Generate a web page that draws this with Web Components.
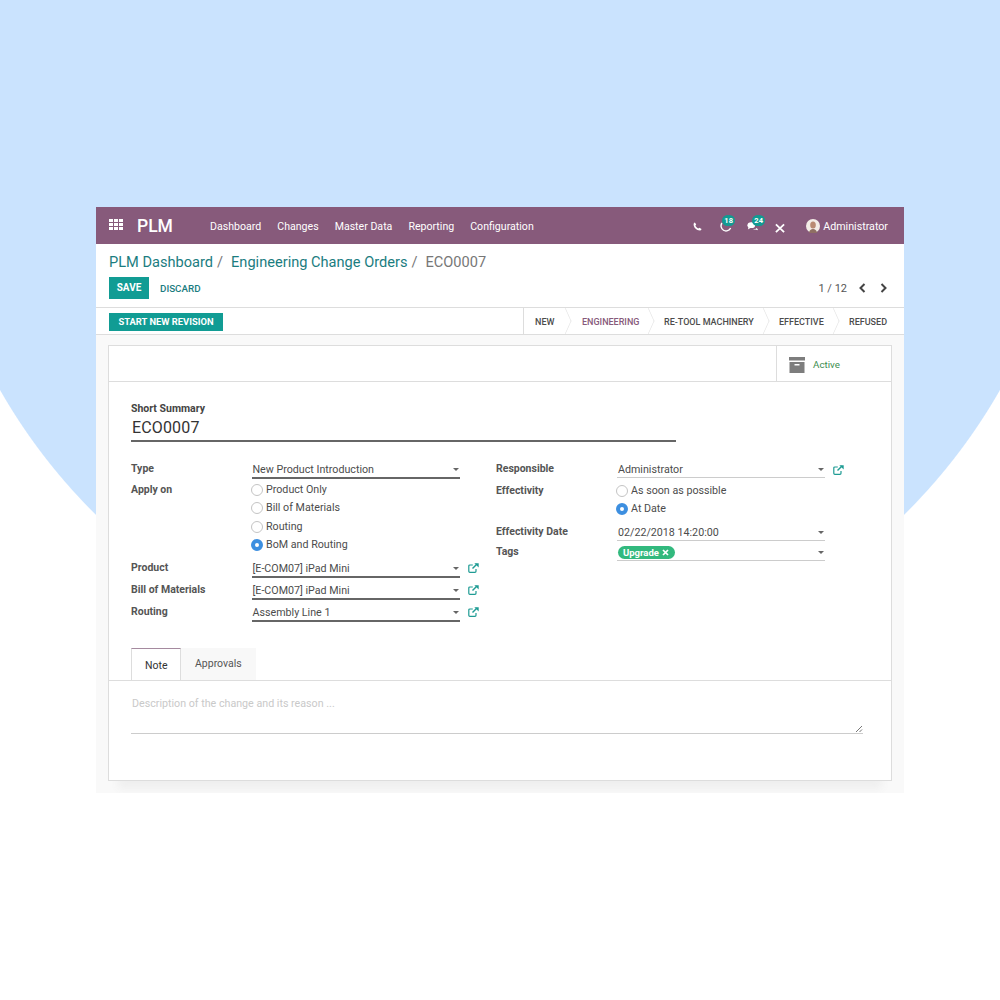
<!DOCTYPE html>
<html>
<head>
<meta charset="utf-8">
<title>PLM</title>
<style>
    html, body { margin: 0; }
    /* big circle behind the window */
    body { font-family: Roboto, "Liberation Sans", sans-serif; font-size: 11px; color: #4c4c4c; height: 1000px; overflow: hidden; background: radial-gradient(circle at 500px 105px, #cae3fe 575px, #fff 576px); }
</style>
</head>
<body>
<plm-app>
    <plm-navbar></plm-navbar>
    <plm-control-panel></plm-control-panel>
    <plm-statusbar></plm-statusbar>
    <plm-sheet></plm-sheet>
</plm-app>

<script>
const EXT_ICON = `<svg width="11" height="10" viewBox="0 0 11 10" fill="none" stroke="#1f9c94" stroke-width="1.2"><path d="M8 6v2.300a1 1 0 0 1-1 1H1.800a1 1 0 0 1-1-1V3a1 1 0 0 1 1-1h3"/><path d="M4.500 5.600 9 1.100" stroke-width="1.400"/><path d="M6.300.2h4.400v4.400z" fill="#1f9c94" stroke="none"/></svg>`;

class PlmApp extends HTMLElement {
    constructor() {
        super();
        this.attachShadow({ mode: "open" }).innerHTML = `
            <style>
                :host { display: block; width: 808px; height: 586px; margin: 207px 0 0 96px; background: #f9f9f9; overflow: hidden; }
            </style>
            <slot></slot>
        `;
    }
}

class PlmNavbar extends HTMLElement {
    constructor() {
        super();
        this.attachShadow({ mode: "open" }).innerHTML = `
            <style>
                :host { display: flex; align-items: center; height: 37px; background: #875a7b; color: #fff; font-size: 10.600px; padding: 1px 16px 0 13px; box-sizing: border-box; }
                .grid { width: 14px; height: 11px; margin: -4px 14px 0 0; display: block; }
                .brand { font-size: 17.500px; font-weight: 500; width: 73px; margin-top: -1px; }
                .menu { display: flex; gap: 16px; flex: 1; }
                .tray { display: flex; align-items: center; }
                .badged { position: relative; display: flex; }
                .badge { position: absolute; top: -5px; min-width: 13px; height: 11px; border-radius: 6px; background: #129a92; font-size: 7.500px; font-weight: 700; line-height: 11px; text-align: center; }
                .user { display: flex; align-items: center; gap: 3px; margin-left: 21px; }
                .user span { font-size: 10.700px; }
                .avatar { width: 14px; height: 14px; display: block; }
            </style>
            <svg class="grid" viewBox="0 0 14 11" fill="#fff">
                <rect x="0" y="0" width="4" height="3"/><rect x="5" y="0" width="4" height="3"/><rect x="10" y="0" width="4" height="3"/>
                <rect x="0" y="4" width="4" height="3"/><rect x="5" y="4" width="4" height="3"/><rect x="10" y="4" width="4" height="3"/>
                <rect x="0" y="8" width="4" height="3"/><rect x="5" y="8" width="4" height="3"/><rect x="10" y="8" width="4" height="3"/>
            </svg>
            <span class="brand">PLM</span>
            <div class="menu">
                <span>Dashboard</span><span>Changes</span><span>Master Data</span><span>Reporting</span><span>Configuration</span>
            </div>
            <div class="tray">
                <svg width="9" height="9" viewBox="0 0 9 9" fill="#fff" style="margin-right:18px"><path d="M1.900.4 3.200 2.600 2.400 3.500c.5 1.300 1.600 2.400 3 3l.9-.8 2.300 1.200c-.2.8-.9 1.500-1.800 1.500C3.400 8.400.6 5.500.6 2.200.6 1.300 1.100.7 1.900.4z"/></svg>
                <span class="badged" style="margin-right:15px">
                    <svg width="12" height="12" viewBox="0 0 12 12" fill="none" stroke="#fff" stroke-width="1.400"><path d="M2 3a5 5 0 1 0 8.600 5"/></svg>
                    <span class="badge" style="left:2px">18</span>
                </span>
                <span class="badged" style="margin-right:16px">
                    <svg width="12" height="12" viewBox="0 0 14 12" fill="#fff"><ellipse cx="5" cy="5" rx="4.500" ry="3.400"/><path d="M2 7 1 10l3.500-2z"/><path d="M7 9.600c2 0 3.500-.3 4.500-1.300l1.500 2.700-3.500-1c-1 .2-2 .1-2.500-.4z"/></svg>
                    <span class="badge" style="left:5px">24</span>
                </span>
                <svg width="10" height="10" viewBox="0 0 11 11" stroke="#fff" stroke-width="2" fill="none" style="margin-top:3px"><path d="M1 1.500 10 10M10 1.500 1 10"/></svg>
                <span class="user">
                    <svg class="avatar" viewBox="0 0 14 14"><circle cx="7" cy="7" r="7" fill="#f3ece6"/><ellipse cx="7" cy="6" rx="2.800" ry="3.600" fill="#b98a72"/><path d="M3 14c.4-3 2-4 4-4s3.600 1 4 4z" fill="#8f6f63"/></svg>
                    <span>Administrator</span>
                </span>
            </div>
        `;
    }
}

class PlmControlPanel extends HTMLElement {
    constructor() {
        super();
        this.attachShadow({ mode: "open" }).innerHTML = `
            <style>
                :host { display: block; height: 63px; background: #fff; padding: 0 13px; box-sizing: border-box; }
                .crumbs { display: flex; padding-top: 8px; height: 25px; font-size: 14.600px; line-height: 20px; color: #777; }
                .crumbs a { color: #1b7d7f; }
                .crumbs i { font-style: normal; color: #777; margin: 0 8px 0 4px; }
                .row { display: flex; align-items: center; justify-content: space-between; }
                .btns { display: flex; align-items: center; }
                .save { width: 40px; height: 22px; line-height: 22px; text-align: center; background: #119c94; color: #fff; font-size: 10px; font-weight: 700; }
                .discard { margin-left: 11px; color: #1b7d7f; font-size: 9.800px; font-weight: 500; }
                .pager { display: flex; align-items: center; font-size: 11px; color: #555; margin-right: 3px; }
                .pager svg { display: block; margin-left: 12px; }
                .pager svg.first { margin-left: 11px; }
            </style>
            <div class="crumbs"><a>PLM Dashboard</a><i>/</i><a>Engineering Change Orders</a><i>/</i><span>ECO0007</span></div>
            <div class="row">
                <div class="btns"><span class="save">SAVE</span><span class="discard">DISCARD</span></div>
                <div class="pager">
                    <span>1 / 12</span>
                    <svg class="first" width="9" height="10" viewBox="0 0 9 10" fill="none" stroke="#444" stroke-width="2"><path d="M6.500 1 2.500 5l4 4"/></svg>
                    <svg width="9" height="10" viewBox="0 0 9 10" fill="none" stroke="#444" stroke-width="2"><path d="M2.500 1l4 4-4 4"/></svg>
                </div>
            </div>
        `;
    }
}

class PlmStatusbar extends HTMLElement {
    constructor() {
        super();
        this.attachShadow({ mode: "open" }).innerHTML = `
            <style>
                :host { display: flex; align-items: center; justify-content: space-between; height: 28px; box-sizing: border-box; background: #fff; border-top: 1px solid #ddd; border-bottom: 1px solid #ddd; padding-left: 13px; }
                .action { height: 18px; line-height: 18px; width: 114px; margin-top: 1px; text-align: center; background: #119c94; color: #fff; font-size: 9.400px; font-weight: 700; }
                .steps { display: flex; height: 100%; border-left: 1px solid #ddd; font-size: 9px; font-weight: 500; color: #4c4c4c; overflow: hidden; }
                .step { display: flex; align-items: center; height: 100%; padding-top: 1px; position: relative; box-sizing: border-box; }
                .step + .step::before { content: ""; position: absolute; left: -10px; top: 3px; width: 19px; height: 19px; border-top: 1px solid #e2e2e2; border-right: 1px solid #e2e2e2; transform: scaleX(.45) rotate(45deg); }
                .on { color: #875a7b; }
            </style>
            <span class="action">START NEW REVISION</span>
            <div class="steps">
                <span class="step" style="width:41px;padding-left:11px">NEW</span>
                <span class="step on" style="width:83px;padding-left:17px">ENGINEERING</span>
                <span class="step" style="width:115px;padding-left:16px">RE-TOOL MACHINERY</span>
                <span class="step" style="width:70px;padding-left:16px">EFFECTIVE</span>
                <span class="step" style="width:71px;padding-left:16px">REFUSED</span>
            </div>
        `;
    }
}

class PlmField extends HTMLElement {
    constructor() {
        super();
        this.attachShadow({ mode: "open" }).innerHTML = `
            <style>
                :host { display: grid; grid-template-columns: 121px 208px 19px; align-items: start; height: 22px; }
                .label { font-weight: 700; font-size: 10.500px; color: #555; line-height: 14px; }
                :host([options]) .label { padding-top: 2px; }
                .value { font-size: 10.700px; line-height: 14px; }
                .select { position: relative; height: 16.500px; padding: .5px 0 0 .5px; box-sizing: border-box; border-bottom: 2px solid #666; }
                :host([light]) .select { height: 16px; border-bottom: 1px solid #ccc; padding-top: 1px; padding-left: 1px; }
                .caret { position: absolute; right: 1px; top: 6px; border: 3px solid transparent; border-top: 3px solid #666; border-bottom: 0; }
                .link { display: none; padding: 2px 0 0 8px; }
                :host([light]) .link { padding-top: 2.500px; }
                :host([external]) .link { display: block; }
            </style>
            <div class="label"></div>
            <div class="value"></div>
            <div class="link">${EXT_ICON}</div>
        `;
    }
    connectedCallback() {
        const root = this.shadowRoot;
        root.querySelector(".label").textContent = this.getAttribute("label");
        const box = root.querySelector(".value");
        if (this.hasAttribute("options")) {
            box.innerHTML = `<slot></slot>`;
        } else {
            box.innerHTML = `<div class="select"><slot></slot><span class="caret"></span></div>`;
        }
    }
}

class PlmRadio extends HTMLElement {
    constructor() {
        super();
        this.attachShadow({ mode: "open" }).innerHTML = `
            <style>
                :host { display: flex; align-items: center; gap: 3px; height: 18.500px; font-size: 10.700px; }
                .dot { width: 12px; height: 12px; margin-left: -1px; box-sizing: border-box; border: 1px solid #c4c4c4; border-radius: 50%; background: #fff; }
                :host([checked]) .dot { background: #fff; border: 4px solid #3d8fe0; }
            </style>
            <span class="dot"></span><slot></slot>
        `;
    }
}

class PlmTag extends HTMLElement {
    constructor() {
        super();
        this.attachShadow({ mode: "open" }).innerHTML = `
            <style>
                :host { display: inline-flex; align-items: center; gap: 3px; height: 13px; padding: 0 6px 0 5px; border-radius: 7px; background: #32b97e; color: #fff; font-size: 9.500px; line-height: 13px; font-weight: 700; vertical-align: top; }
                svg { display: block; }
            </style>
            <slot></slot>
            <svg width="7" height="7" viewBox="0 0 7 7" stroke="#fff" stroke-width="1.700" fill="none"><path d="M1 1l5 5M6 1 1 6"/></svg>
        `;
    }
}

class PlmSheet extends HTMLElement {
    constructor() {
        super();
        this.attachShadow({ mode: "open" }).innerHTML = `
            <style>
                :host { display: block; width: 784px; height: 436px; box-sizing: border-box; margin: 10px 0 0 12px; background: #fff; border: 1px solid #ddd; box-shadow: 0 18px 8px -10px #efefef; }
                .buttons { display: flex; justify-content: flex-end; height: 36px; box-sizing: border-box; border-bottom: 1px solid #ddd; }
                .active { display: flex; align-items: center; width: 115px; box-sizing: border-box; border-left: 1px solid #ddd; padding: 2px 0 0 12px; gap: 8px; color: #3c8d4f; font-size: 9.800px; }
                .body { padding: 20px 22px 0; }
                .small { font-size: 10.500px; font-weight: 700; color: #444; line-height: 13px; }
                .title { width: 544px; height: 22px; margin-top: 2px; padding: 1px 0 0 1px; box-sizing: content-box; font-size: 16px; line-height: 20px; color: #333; letter-spacing: .15px; border-bottom: 2px solid #666; }
                .cols { display: flex; gap: 17px; margin-top: 20px; height: 186px; }
                .tabs { display: flex; padding-left: 22px; height: 32px; border-bottom: 1px solid #ddd; }
                .tab { box-sizing: border-box; height: 32px; line-height: 32px; padding: 0 14px; font-size: 10.500px; color: #555; background: #f8f8f8; }
                .tab.on { width: 50px; padding: 0 13px; line-height: 33px; background: #fff; color: #333; border: 1px solid #ddd; border-bottom: 0; border-top-color: #a58a9f; }
                .note { position: relative; margin: 0 28px 0 22px; height: 53px; border-bottom: 1px solid #ccc; box-sizing: border-box; padding: 16px 1px 0; font-size: 10.700px; color: #c9c9c9; }
                .grip { position: absolute; right: 0; bottom: 0; }
            </style>
            <div class="buttons">
                <div class="active">
                    <svg width="16" height="16" viewBox="0 0 16 16" fill="#7d7d7d"><rect x="0" y="0" width="16" height="3.500"/><path d="M.5 5h15v11H.5zM5.500 7v1.500h5V7z" fill-rule="evenodd"/></svg>
                    <span>Active</span>
                </div>
            </div>
            <div class="body">
                <div class="small">Short Summary</div>
                <div class="title">ECO0007</div>
                <div class="cols">
                    <div>
                        <plm-field label="Type" style="height:18.500px">New Product Introduction</plm-field>
                        <plm-field label="Apply on" options style="height:80.500px">
                            <plm-radio>Product Only</plm-radio>
                            <plm-radio>Bill of Materials</plm-radio>
                            <plm-radio>Routing</plm-radio>
                            <plm-radio checked>BoM and Routing</plm-radio>
                        </plm-field>
                        <plm-field label="Product" external>[E-COM07] iPad Mini</plm-field>
                        <plm-field label="Bill of Materials" external>[E-COM07] iPad Mini</plm-field>
                        <plm-field label="Routing" external>Assembly Line 1</plm-field>
                    </div>
                    <div>
                        <plm-field label="Responsible" external light style="height:19.500px">Administrator</plm-field>
                        <plm-field label="Effectivity" options style="height:43px">
                            <plm-radio>As soon as possible</plm-radio>
                            <plm-radio checked>At Date</plm-radio>
                        </plm-field>
                        <plm-field label="Effectivity Date" light style="height:20.500px">02/22/2018 14:20:00</plm-field>
                        <plm-field label="Tags" light><plm-tag>Upgrade</plm-tag></plm-field>
                    </div>
                </div>
            </div>
            <div class="tabs">
                <span class="tab on">Note</span>
                <span class="tab">Approvals</span>
            </div>
            <div class="note">
                Description of the change and its reason ...
                <svg class="grip" width="8" height="8" viewBox="0 0 8 8" stroke="#777" fill="none"><path d="M1 7 7 1M4.500 7 7 4.500"/></svg>
            </div>
        `;
    }
}

customElements.define("plm-app", PlmApp);
customElements.define("plm-navbar", PlmNavbar);
customElements.define("plm-control-panel", PlmControlPanel);
customElements.define("plm-statusbar", PlmStatusbar);
customElements.define("plm-field", PlmField);
customElements.define("plm-radio", PlmRadio);
customElements.define("plm-tag", PlmTag);
customElements.define("plm-sheet", PlmSheet);
</script>
</body>
</html>
